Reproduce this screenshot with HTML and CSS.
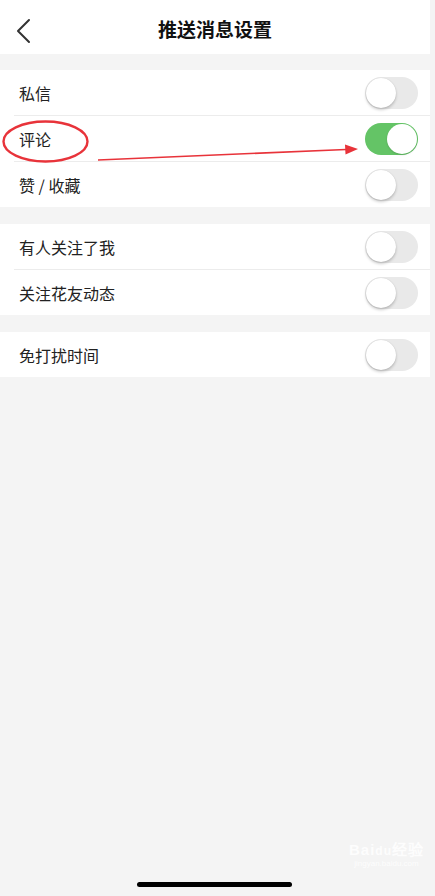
FILE: index.html
```html
<!DOCTYPE html>
<html lang="zh-CN">

<head>
    <meta charset="UTF-8">
    <meta name="viewport" content="width=device-width, initial-scale=1.0">
    <title>推送消息设置</title>
    <link rel="stylesheet" href="styles.css">
</head>

<body>
    <div class="page">
        <header class="nav">
            <svg class="back" width="20" height="26" viewBox="0 0 20 26">
                <path d="M14 2 L3 13 L14 24" fill="none" stroke="#333" stroke-width="2" stroke-linecap="round" stroke-linejoin="round"/>
            </svg>
            <h1 class="title">推送消息设置</h1>
        </header>

        <section class="group">
            <div class="row"><span>私信</span><span class="switch"></span></div>
            <div class="row"><span>评论</span><span class="switch on"></span></div>
            <div class="row"><span>赞 / 收藏</span><span class="switch"></span></div>
        </section>

        <section class="group">
            <div class="row"><span>有人关注了我</span><span class="switch"></span></div>
            <div class="row"><span>关注花友动态</span><span class="switch"></span></div>
        </section>

        <section class="group">
            <div class="row"><span>免打扰时间</span><span class="switch"></span></div>
        </section>

        <!-- 红色标注 -->
        <svg class="marks" width="435" height="200" viewBox="0 0 435 200">
            <ellipse cx="45.5" cy="141.5" rx="42" ry="20" fill="none" stroke="#e8333a" stroke-width="2.4"/>
            <path d="M98 160 L346 149.5" stroke="#e8333a" stroke-width="1.6" fill="none"/>
            <path d="M345 144.5 L358 149 L345.5 154.5 Z" fill="#e8333a"/>
        </svg>

        <div class="watermark">
            <span class="wm-logo">Bai<b>du</b>经验</span>
            <span class="wm-url">jingyan.baidu.com</span>
        </div>

        <div class="home-bar"></div>
    </div>
</body>

</html>
```

FILE: styles.css
```css
/* 页面 */
body {
    margin: 0;
    background-color: #f4f4f4;
    font-family: "Noto Sans CJK SC", "Noto Sans", sans-serif;
    color: #222;
}

.page {
    position: relative;
    width: 430px;
    height: 896px;
    background-color: #f4f4f4;
}

/* 顶部导航 */
.nav {
    height: 54px;
    background-color: #fff;
    display: flex;
    align-items: center;
    justify-content: center;
    position: relative;
    margin-bottom: 16px;
}

.back {
    position: absolute;
    left: 15px;
    top: 18px;
}

.title {
    margin: 0;
    font-size: 19px;
    font-weight: bold;
    color: #111;
    padding: 3px 0 0 0;
}

/* 列表 */
.group {
    background-color: #fff;
    margin-bottom: 17px;
    padding-left: 14px;
}

.row {
    box-sizing: border-box;
    height: 46px;
    display: flex;
    align-items: center;
    justify-content: space-between;
    padding: 0 12px 0 5px;
    border-bottom: 1px solid #ececec;
    font-size: 16px;
    color: #222;
}

.row:last-child {
    border-bottom: none;
    height: 45px;
}

/* 开关 */
.switch {
    position: relative;
    width: 53px;
    height: 32px;
    border-radius: 16px;
    background-color: #e9e9e9;
    box-sizing: border-box;
}

.switch::after {
    content: "";
    position: absolute;
    left: 1px;
    top: 1px;
    width: 30px;
    height: 30px;
    border-radius: 50%;
    background-color: #fff;
    box-shadow: 0 2px 3px rgba(0, 0, 0, 0.2), 0 0 1px rgba(0, 0, 0, 0.15);
}

.switch.on {
    background-color: #64c466;
}

.switch.on::after {
    left: 22px;
    box-shadow: 0 1px 2px rgba(0, 0, 0, 0.15);
}

/* 标注 */
.marks {
    position: absolute;
    left: 0;
    top: 0;
    pointer-events: none;
}

/* 水印 */
.watermark {
    position: absolute;
    right: 6px;
    bottom: 28px;
    display: flex;
    flex-direction: column;
    align-items: center;
    color: rgba(255, 255, 255, 0.85);
    font-family: "Liberation Sans", sans-serif;
}

.wm-logo {
    font-size: 15px;
    font-weight: bold;
    letter-spacing: 1px;
}

.wm-logo b {
    font-size: 12px;
}

.wm-url {
    font-size: 8px;
}

/* 底部指示条 */
.home-bar {
    position: absolute;
    left: 137px;
    top: 882px;
    width: 155px;
    height: 5px;
    border-radius: 3px;
    background-color: #000;
}
```
